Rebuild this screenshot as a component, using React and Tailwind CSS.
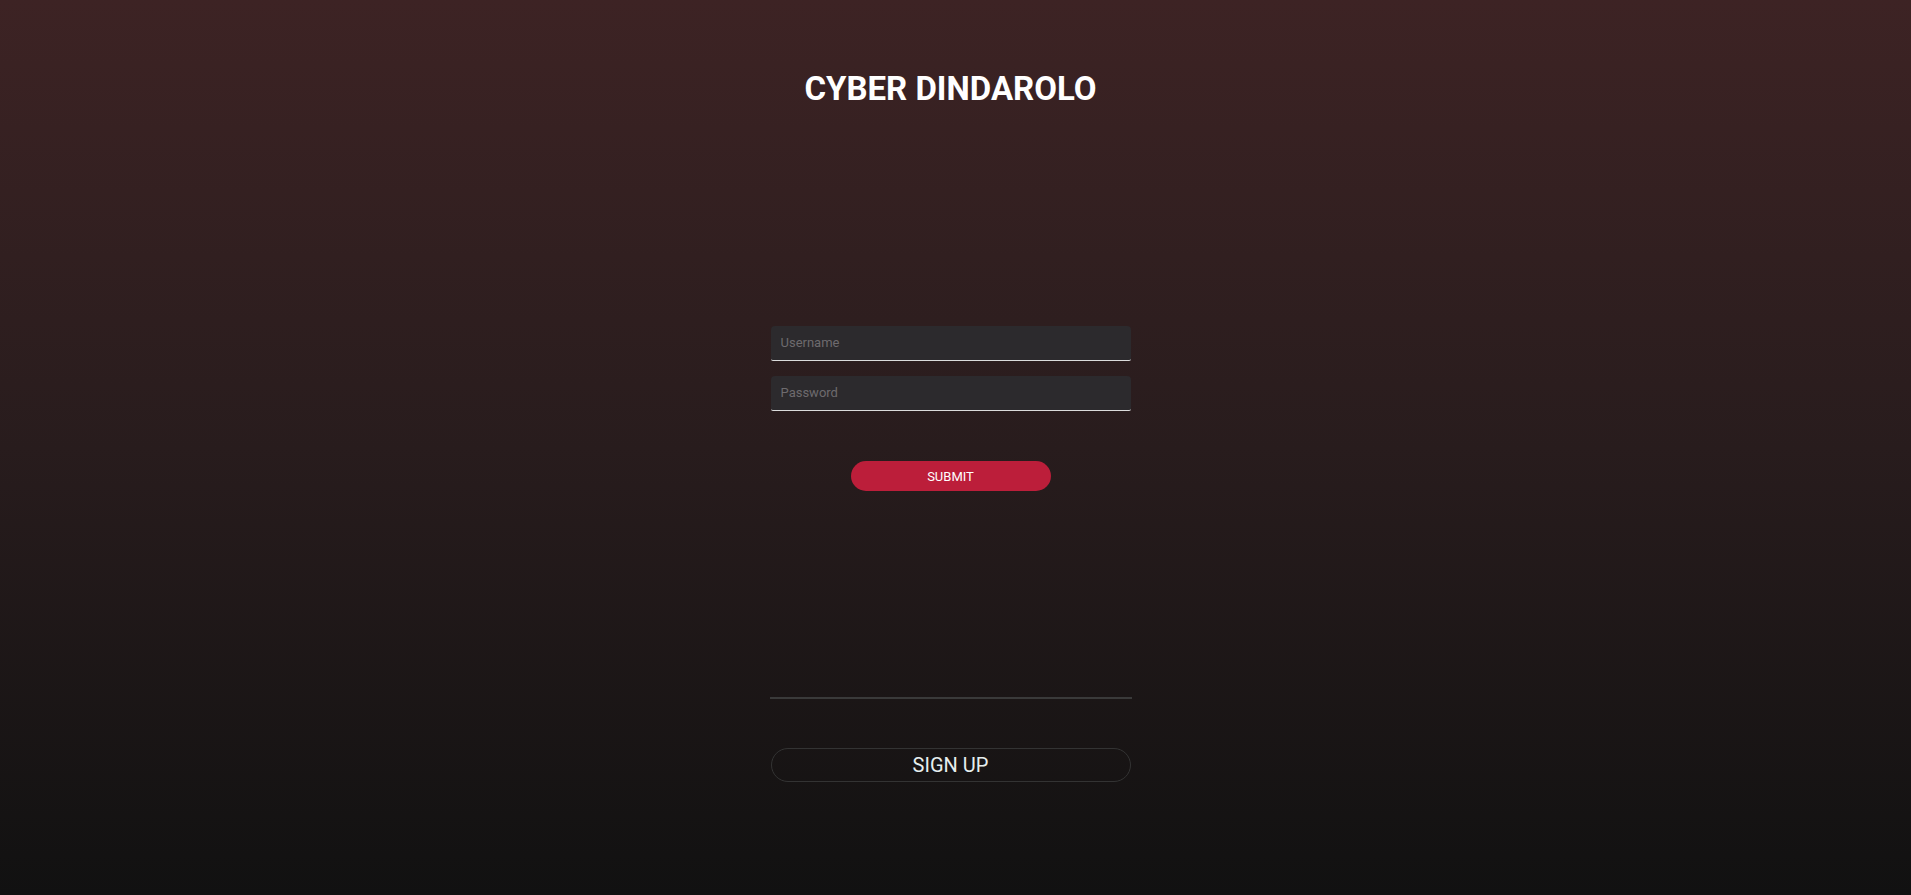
export default function App() {
  return (
    <div
      className="min-h-[895px] w-full bg-gradient-to-b from-[#3d2324] via-[#281c1d] to-[#111111] pr-[10px] flex flex-col items-center"
      style={{ fontFamily: 'Roboto, "Liberation Sans", sans-serif' }}
    >
      <h1 className="mt-[69px] text-[33px] leading-[40px] font-bold text-white">
        CYBER DINDAROLO
      </h1>
      <form
        className="mt-[217px] w-[360px] flex flex-col"
        onSubmit={(e) => e.preventDefault()}
      >
        <input
          type="text"
          placeholder="Username"
          className="h-[35px] w-full rounded-t-[4px] rounded-b-[2px] bg-[#2c2a2d] border-b border-[#dcdcdc] px-[10px] pb-[2px] text-[13px] text-white placeholder:text-[#6e6b6e] outline-none"
        />
        <input
          type="password"
          placeholder="Password"
          className="mt-[15px] h-[35px] w-full rounded-t-[4px] rounded-b-[2px] bg-[#2c2a2d] border-b border-[#dcdcdc] px-[10px] pb-[2px] text-[13px] text-white placeholder:text-[#6e6b6e] outline-none"
        />
        <button
          type="submit"
          className="mt-[50px] self-center w-[200px] h-[30px] rounded-full bg-[#bc1e3a] text-white text-[13px] leading-none"
        >
          SUBMIT
        </button>
      </form>
      <div className="mt-[206px] w-[362px] h-[2px] bg-[#3a3a3a]" />
      <button className="mt-[49px] w-[360px] h-[34px] rounded-full border border-[#333333] bg-transparent text-[#e6eeee] text-[20px] leading-none">
        SIGN UP
      </button>
    </div>
  );
}
